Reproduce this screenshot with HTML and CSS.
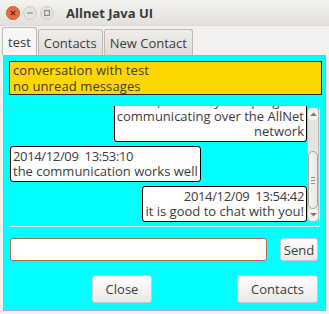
FILE: index.html
```html
<!DOCTYPE html>
<html>
<head>
<meta charset="utf-8">
<link rel="stylesheet" href="styles.css">
</head>
<body>
<div class="titlebar">
  <div class="wbtns">
    <svg class="wb" width="14" height="14" viewBox="0 0 14 14"><circle cx="7" cy="7" r="6.6" fill="#ec6a3e" stroke="#c85630" stroke-width="0.8"/><path d="M4.8 4.8 L9.2 9.2 M9.2 4.8 L4.8 9.2" stroke="#5a2a18" stroke-width="1.2"/></svg>
    <svg class="wb" width="14" height="14" viewBox="0 0 14 14"><circle cx="7" cy="7" r="6.4" fill="#e6e4e0" stroke="#c6c3be" stroke-width="0.8"/><path d="M4.2 7 L9.8 7" stroke="#8a8782" stroke-width="1.2"/></svg>
    <svg class="wb" width="14" height="14" viewBox="0 0 14 14"><circle cx="7" cy="7" r="6.4" fill="#e6e4e0" stroke="#c6c3be" stroke-width="0.8"/><rect x="4.6" y="4.6" width="4.8" height="4.8" fill="none" stroke="#8a8782" stroke-width="1.1"/></svg>
  </div>
  <span class="title">Allnet Java UI</span>
</div>
<div class="tabs">
  <div class="tab sel">test</div>
  <div class="tab">Contacts</div>
  <div class="tab">New Contact</div>
</div>
<div class="panel">
  <div class="status">conversation with test<br>no unread messages</div>
  <div class="scroll">
    <div class="msgs">
      <div class="msg me">hello, this is my first program<br>communicating over the AllNet<br>network</div>
      <div class="msg them"><span class="ts">2014/12/09&nbsp; 13:53:10</span><br>the communication works well</div>
      <div class="msg me"><span class="ts">2014/12/09&nbsp; 13:54:42</span><br>it is good to chat with you!</div>
    </div>
    <div class="sb">
      <div class="arrow"><svg width="9" height="6" viewBox="0 0 9 6"><path d="M1 5 L4.5 1.5 L8 5 Z" fill="#7d7a75"/></svg></div>
      <div class="trough">
        <div class="thumb"><span class="grip"></span><span class="grip"></span><span class="grip"></span></div>
      </div>
      <div class="arrow"><svg width="9" height="6" viewBox="0 0 9 6"><path d="M1 1 L4.5 4.5 L8 1 Z" fill="#7d7a75"/></svg></div>
    </div>
  </div>
  <div class="inputrow">
    <div class="field"></div>
    <div class="btn send">Send</div>
  </div>
  <div class="btnrow">
    <div class="btn close">Close</div>
    <div class="btn contacts">Contacts</div>
  </div>
</div>
</body>
</html>
```
FILE: styles.css
```css
html, body {
  margin: 0;
  padding: 0;
}
body {
  width: 329px;
  height: 314px;
  overflow: hidden;
  background: #f2f1f0;
  font-family: "Open Sans", "DejaVu Sans", sans-serif;
  color: #3c3c3c;
}
.titlebar {
  height: 26px;
  display: flex;
  align-items: center;
  padding-left: 6px;
  background: linear-gradient(#f4f3f1, #e3e0db);
  border-bottom: 1px solid #dcd9d4;
  box-sizing: border-box;
}
.wbtns {
  display: flex;
  align-items: center;
  gap: 3px;
  padding-top: 1px;
}
.wb { display: block; }
.title {
  margin-left: 12px;
  font-weight: bold;
  font-size: 13px;
  color: #3a3a3a;
}
.tabs {
  height: 29px;
  display: flex;
  align-items: flex-end;
  padding-left: 2px;
  gap: 1px;
}
.tab {
  height: 26px;
  line-height: 26px;
  padding: 0 5px;
  font-size: 13px;
  border: 1px solid #bdb9b3;
  border-bottom: none;
  border-radius: 3px 3px 0 0;
  background: linear-gradient(#efedea, #e0ddd8);
  box-sizing: border-box;
}
.tab.sel {
  height: 28px;
  line-height: 29px;
  background: #f7f6f5;
}
.panel {
  margin-left: 3px;
  width: 323px;
  height: 256px;
  box-sizing: border-box;
  border: 1px solid #b0ada8;
  background: #00ffff;
  display: flex;
  flex-direction: column;
  padding: 5px 3px 0 5px;
}
.status {
  height: 34px;
  box-sizing: border-box;
  border: 1px solid #2a2a2a;
  background: #ffd700;
  padding: 0 3px;
  font-size: 13px;
  line-height: 16px;
  letter-spacing: 0.1px;
}
.scroll {
  margin-top: 10px;
  width: 311px;
  height: 122px;
  box-sizing: border-box;
  border: 1px solid #a9b4b4;
  border-right-color: #d8e4e4;
  border-bottom-color: #d8e4e4;
  display: flex;
}
.msgs {
  flex: 1;
  display: flex;
  flex-direction: column;
  justify-content: flex-end;
  overflow: hidden;
  gap: 4px;
  padding-bottom: 4px;
}
.msg {
  flex: none;
  border: 1px solid #000;
  border-radius: 3px;
  background: #fff;
  padding: 2px;
  font-size: 13px;
  line-height: 15px;
  white-space: nowrap;
}
.ts {
  letter-spacing: -0.35px;
}
.msg.me {
  align-self: flex-end;
  text-align: right;
}
.msg.them {
  align-self: flex-start;
}
.sb {
  width: 12px;
  display: flex;
  flex-direction: column;
  background: #e6e4e0;
  border: 1px solid #bcb9b4;
  border-radius: 5px;
  box-sizing: border-box;
  margin: 1px 0 4px 0;
}
.arrow {
  height: 12px;
  display: flex;
  align-items: center;
  justify-content: center;
  background: #f3f2f0;
  border-radius: 4px;
}
.trough {
  flex: 1;
  display: flex;
  flex-direction: column;
  justify-content: flex-end;
}
.thumb {
  height: 58px;
  box-sizing: border-box;
  border: 1px solid #aaa6a0;
  border-radius: 5px;
  background: linear-gradient(90deg, #f6f5f3, #e9e7e4);
  display: flex;
  flex-direction: column;
  justify-content: center;
  align-items: center;
  gap: 2px;
}
.grip {
  width: 4px;
  height: 1px;
  background: #9a968f;
}
.inputrow {
  margin-top: 11px;
  display: flex;
  align-items: center;
}
.field {
  margin-left: 1px;
  width: 257px;
  height: 23px;
  box-sizing: border-box;
  border: 1px solid #b06c4c;
  border-radius: 3px;
  background: #fff;
}
.btn {
  box-sizing: border-box;
  border: 1px solid #cdcbc7;
  border-radius: 3px;
  background: linear-gradient(#fdfdfd, #ebeae8);
  font-size: 13px;
  display: flex;
  align-items: center;
  justify-content: center;
}
.send {
  margin-left: 13px;
  width: 38px;
  height: 23px;
}
.btnrow {
  margin-top: 14px;
  display: flex;
}
.close {
  margin-left: 83px;
  width: 60px;
  height: 28px;
}
.contacts {
  margin-left: 85px;
  width: 81px;
  height: 28px;
}
```
